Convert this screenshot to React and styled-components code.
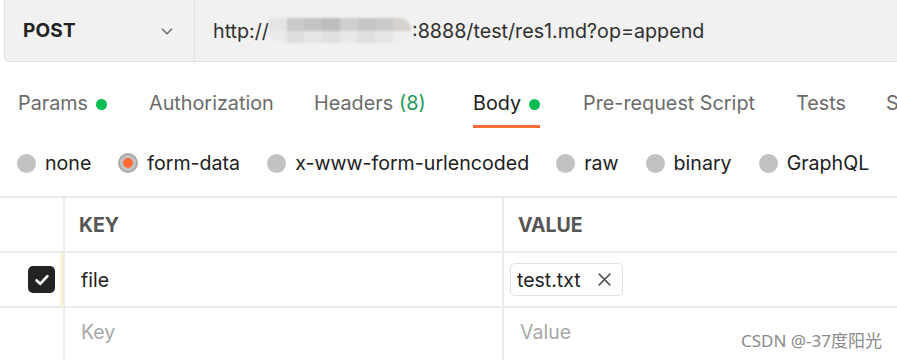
import React from "react";
import styled, { createGlobalStyle, css } from "styled-components";

const GlobalStyle = createGlobalStyle`
  html, body {
    margin: 0;
    padding: 0;
    background: #ffffff;
  }
  body {
    font-family: Inter, "Noto Sans", "Noto Sans CJK SC", sans-serif;
    color: #212121;
    overflow: hidden;
  }
`;

const tabs = [
  { label: "Params", dot: true, w: 131 },
  { label: "Authorization", w: 165 },
  { label: "Headers", count: "(8)", w: 159 },
  { label: "Body", dot: true, active: true, w: 110 },
  { label: "Pre-request Script", w: 213 },
  { label: "Tests", w: 90 },
  { label: "Settings", w: 120 },
];

const bodyTypes = [
  { label: "none" },
  { label: "form-data", checked: true },
  { label: "x-www-form-urlencoded" },
  { label: "raw" },
  { label: "binary" },
  { label: "GraphQL" },
];

// pixelated blur hiding the host in the url
const blurCells = [
  "#e4e4e4", "#c9c9c9", "#c4c4c4", "#bdbdbd", "#cfcfcf", "#c6c6c6", "#cacaca", "#d6d3d0",
  "#ebebeb", "#dedede", "#e6e6e6", "#e1e1e1", "#e9e9e9", "#dfdfdf", "#e6e6e6", "#eeeeee",
];

const App = () => {
  return (
    <>
      <GlobalStyle />
      <Page>
        <UrlBar>
          <Method>
            <MethodName>POST</MethodName>
            <Chevron viewBox="0 0 16 16">
              <path d="M3.5 6 L8 10.5 L12.5 6" />
            </Chevron>
          </Method>
          <UrlText>
            http://
            <Blur>
              {blurCells.map((c, i) => (
                <BlurCell key={i} style={{ background: c }} />
              ))}
            </Blur>
            :8888/test/res1.md?op=append
          </UrlText>
        </UrlBar>

        <TabRow>
          {tabs.map((t) => (
            <Tab key={t.label} w={t.w}>
              <TabLabel active={t.active}>
                {t.label}
                {t.count && <Count>{t.count}</Count>}
                {t.dot && <GreenDot />}
              </TabLabel>
            </Tab>
          ))}
        </TabRow>

        <RadioRow>
          {bodyTypes.map((b) => (
            <RadioItem key={b.label}>
              <Radio checked={b.checked} />
              <span>{b.label}</span>
            </RadioItem>
          ))}
        </RadioRow>

        <Table>
          <Row>
            <CheckCell />
            <KeyCell>
              <HeadText>KEY</HeadText>
            </KeyCell>
            <ValueCell>
              <HeadText>VALUE</HeadText>
            </ValueCell>
          </Row>
          <Row>
            <CheckCell marked>
              <CheckBox>
                <svg viewBox="0 0 16 16" width="18" height="18">
                  <path d="M3.2 8.4 L6.4 11.4 L12.8 4.6" fill="none" stroke="#fff" strokeWidth="2.4" strokeLinecap="round" strokeLinejoin="round" />
                </svg>
              </CheckBox>
            </CheckCell>
            <KeyCell>
              <CellText>file</CellText>
            </KeyCell>
            <ValueCell>
              <FileChip>
                test.txt
                <svg viewBox="0 0 16 16" width="17" height="17">
                  <path d="M3 3 L13 13 M13 3 L3 13" stroke="#555" strokeWidth="1.5" strokeLinecap="round" />
                </svg>
              </FileChip>
            </ValueCell>
          </Row>
          <Row last>
            <CheckCell />
            <KeyCell>
              <CellText muted>Key</CellText>
            </KeyCell>
            <ValueCell>
              <CellText muted>Value</CellText>
            </ValueCell>
          </Row>
        </Table>
        <Watermark>CSDN @-37度阳光</Watermark>
      </Page>
    </>
  );
};

const Page = styled.div`
  position: relative;
  width: 897px;
  height: 360px;
  overflow: hidden;
`;

const UrlBar = styled.div`
  display: flex;
  height: 61px;
  margin-left: 4px;
  width: 920px;
  background: #f1f1f1;
  border: 1px solid #e3e3e3;
  border-top: none;
  border-radius: 0 0 0 5px;
`;

const Method = styled.div`
  display: flex;
  align-items: center;
  justify-content: space-between;
  width: 190px;
  padding: 0 18px 0 18px;
  box-sizing: border-box;
  border-right: 1px solid #e3e3e3;
`;

const MethodName = styled.span`
  font-size: 19px;
  font-weight: 700;
  color: #212121;
  letter-spacing: 0.2px;
`;

const Chevron = styled.svg`
  width: 18px;
  height: 18px;
  fill: none;
  stroke: #6b6b6b;
  stroke-width: 1.3;
`;

const UrlText = styled.div`
  display: flex;
  align-items: center;
  padding-left: 18px;
  font-size: 19.7px;
  color: #303030;
  white-space: nowrap;
`;

const Blur = styled.span`
  display: inline-grid;
  grid-template-columns: repeat(8, 1fr);
  width: 142px;
  height: 25px;
  border-radius: 0 12px 12px 12px;
  overflow: hidden;
  margin: 0 1px 0 0;
  filter: blur(1px);
`;

const BlurCell = styled.span`
  display: block;
`;

const TabRow = styled.div`
  display: flex;
  padding: 29px 0 0 18px;
  height: 68px;
  box-sizing: border-box;
  white-space: nowrap;
`;

const Tab = styled.div`
  flex: 0 0 ${(p) => p.w}px;
  display: flex;
  align-items: flex-start;
`;

const TabLabel = styled.div`
  display: flex;
  align-items: flex-start;
  gap: 8px;
  height: 37px;
  font-size: 19.8px;
  color: ${(p) => (p.active ? "#212121" : "#6b6b6b")};
  border-bottom: 3px solid ${(p) => (p.active ? "#ff6c37" : "transparent")};
  box-sizing: border-box;
`;

const Count = styled.span`
  color: #1f9a5c;
  margin-left: -2px;
`;

const GreenDot = styled.span`
  width: 11px;
  height: 11px;
  margin-top: 8px;
  border-radius: 50%;
  background: #0cbb52;
`;

const RadioRow = styled.div`
  display: flex;
  align-items: center;
  gap: 27px;
  height: 66px;
  padding: 0 0 0 17px;
  box-sizing: border-box;
  font-size: 19.6px;
  color: #212121;
`;

const RadioItem = styled.label`
  display: flex;
  align-items: center;
  gap: 9px;
`;

const Radio = styled.span`
  position: relative;
  width: ${(p) => (p.checked ? "20px" : "19px")};
  height: ${(p) => (p.checked ? "20px" : "19px")};
  border-radius: 50%;
  background: #c2c2c2;
  box-sizing: border-box;
  border: ${(p) => (p.checked ? "2px solid #a9a9a9" : "none")};
  &::after {
    content: "";
    display: ${(p) => (p.checked ? "block" : "none")};
    position: absolute;
    left: 50%;
    top: 50%;
    width: 10px;
    height: 10px;
    margin: -5px 0 0 -5px;
    border-radius: 50%;
    background: #ff6c37;
  }
`;

const Table = styled.div`
  border-top: 2px solid #ebebeb;
`;

const Row = styled.div`
  display: grid;
  grid-template-columns: 63px 439px 1fr;
  height: 53px;
  border-bottom: 2px solid #ebebeb;
  ${(p) =>
    p.last &&
    css`
      height: 60px;
      border-bottom: none;
      & > div {
        align-items: flex-start;
        padding-top: 12px;
      }
    `}
`;

const CheckCell = styled.div`
  display: flex;
  align-items: center;
  justify-content: flex-end;
  padding-right: ${(p) => (p.marked ? "5px" : "8px")};
  border-right: ${(p) => (p.marked ? "3px solid #fdf4d6" : "none")};
`;

const KeyCell = styled.div`
  display: flex;
  align-items: center;
  padding-left: 14px;
  border-left: 2px solid #ebebeb;
`;

const ValueCell = styled(KeyCell)`
  padding-left: 14px;
`;

const HeadText = styled.span`
  font-size: 19.5px;
  font-weight: 700;
  color: #555555;
`;

const CellText = styled.span`
  font-size: 19.5px;
  color: ${(p) => (p.muted ? "#a9a9a9" : "#212121")};
  padding-left: 2px;
`;

const CheckBox = styled.span`
  display: flex;
  align-items: center;
  justify-content: center;
  width: 27px;
  height: 27px;
  border-radius: 5px;
  background: #232323;
`;

const FileChip = styled.span`
  display: inline-flex;
  align-items: center;
  gap: 15px;
  height: 31px;
  margin-left: -8px;
  padding: 0 9px 0 6px;
  border: 1px solid #e0e0e0;
  border-radius: 5px;
  font-size: 19.5px;
  color: #212121;
`;

const Watermark = styled.div`
  position: absolute;
  right: 15px;
  bottom: 8px;
  font-family: "Noto Sans", "Noto Sans CJK SC", sans-serif;
  font-size: 17px;
  color: #8a8a8a;
`;

export default App;
